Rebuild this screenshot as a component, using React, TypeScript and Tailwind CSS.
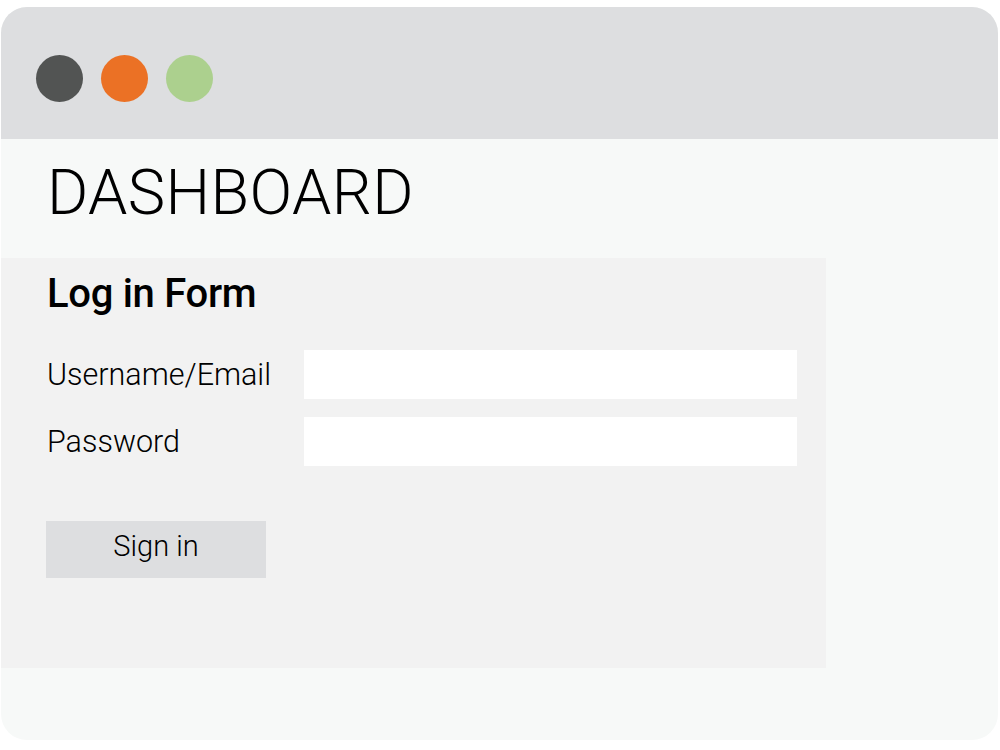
export default function App() {
  return (
    <div className="w-[1000px] h-[750px] bg-white pt-[7px] pl-[1px] font-['Roboto','Liberation_Sans',sans-serif] text-black">
      <div className="w-[997px] h-[733px] rounded-[26px] overflow-hidden bg-[#f7f9f8] flex flex-col">
        {/* Title bar */}
        <div className="h-[132px] shrink-0 bg-[#dddee0] flex items-center gap-[18px] pl-[35px] pt-[10px]">
          <div className="w-[47px] h-[47px] rounded-full bg-[#525453]" />
          <div className="w-[47px] h-[47px] rounded-full bg-[#eb7125]" />
          <div className="w-[47px] h-[47px] rounded-full bg-[#acd08e]" />
        </div>

        {/* Heading */}
        <div className="h-[119px] shrink-0 pl-[46px] pt-[16px]">
          <h1 className="text-[63px] font-light leading-[76px] tracking-[0.4px]">DASHBOARD</h1>
        </div>

        {/* Form panel */}
        <div className="w-[825px] h-[410px] bg-[#f2f2f2] pl-[46px] pt-[13px]">
          <h2 className="text-[40px] font-medium leading-[46px] tracking-[-0.3px]">Log in Form</h2>

          <div className="mt-[33px] flex flex-col gap-[18px]">
            <div className="flex items-center">
              <label className="w-[257px] text-[30.5px] font-light leading-[49px]">Username/Email</label>
              <div className="w-[493px] h-[49px] bg-white" />
            </div>
            <div className="flex items-center">
              <label className="w-[257px] text-[30.5px] font-light leading-[49px]">Password</label>
              <div className="w-[493px] h-[49px] bg-white" />
            </div>
          </div>

          <button className="mt-[55px] -ml-[1px] w-[220px] h-[57px] bg-[#dddee0] text-[29px] font-light flex items-center justify-center pb-[6px]">
            Sign in
          </button>
        </div>
      </div>
    </div>
  );
}
